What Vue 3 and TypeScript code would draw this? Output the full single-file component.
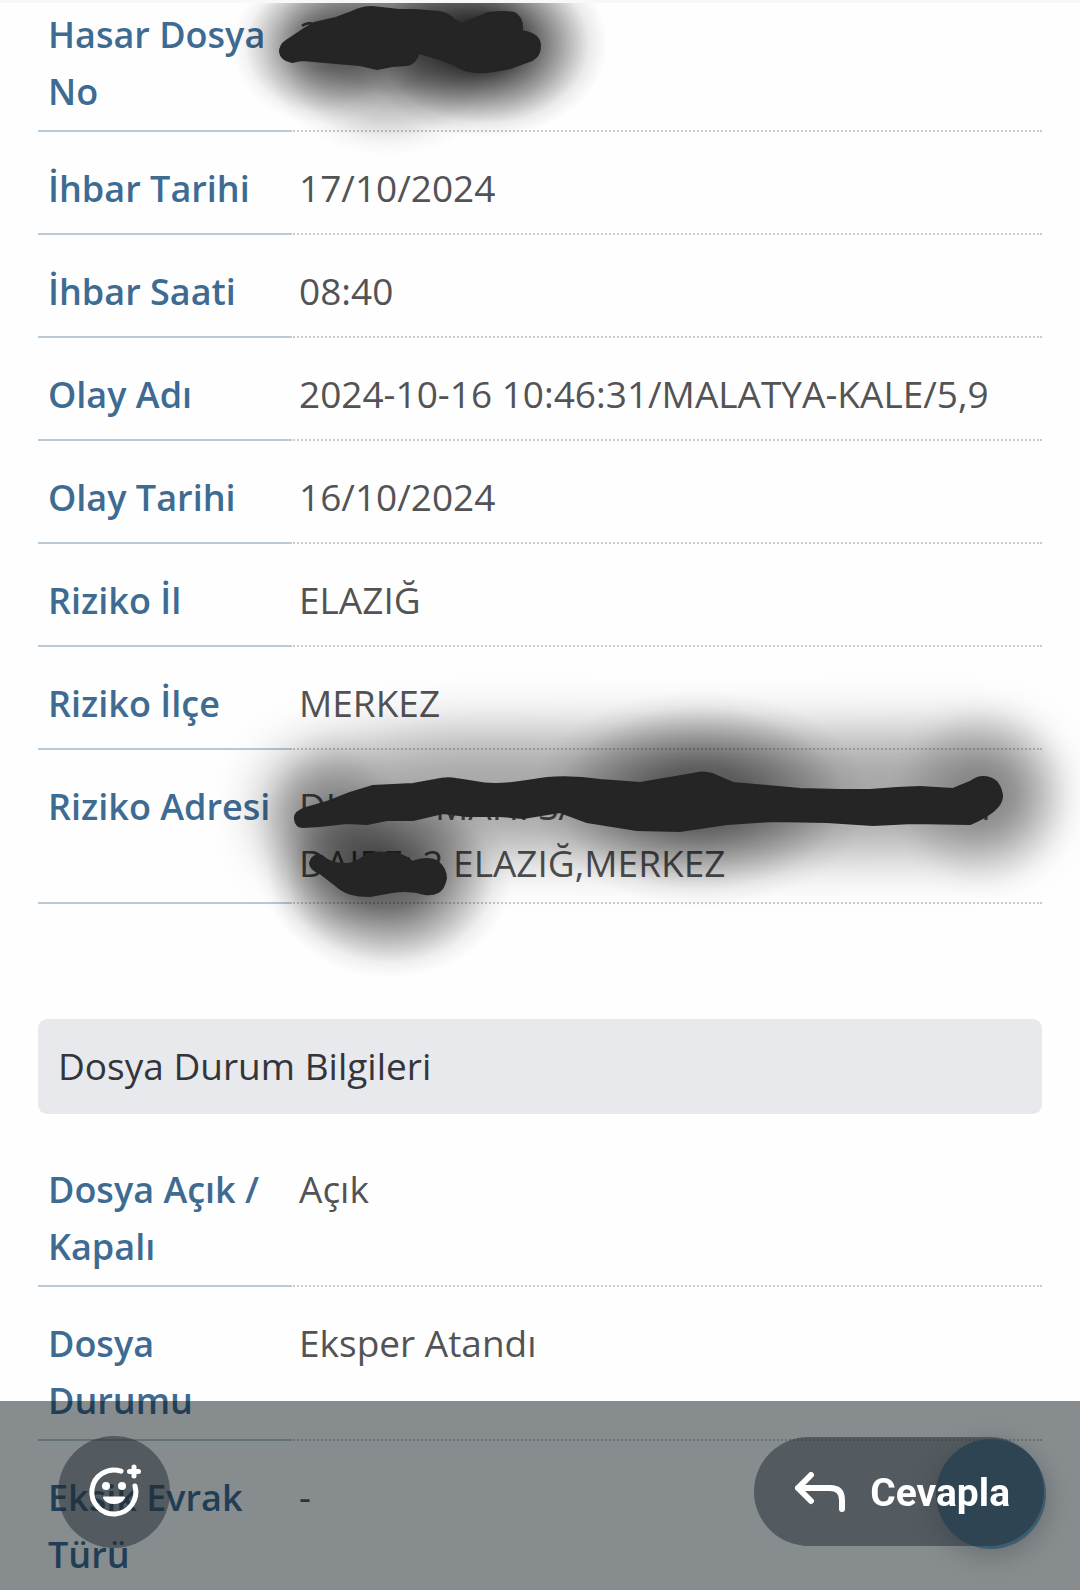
<script setup lang="ts">
interface Row {
  label: string
  value: string
  kind?: 'number' | 'address'
}

const claimRows: Row[] = [
  { label: 'Hasar Dosya No', value: '2', kind: 'number' },
  { label: 'İhbar Tarihi', value: '17/10/2024' },
  { label: 'İhbar Saati', value: '08:40' },
  { label: 'Olay Adı', value: '2024-10-16 10:46:31/MALATYA-KALE/5,9' },
  { label: 'Olay Tarihi', value: '16/10/2024' },
  { label: 'Riziko İl', value: 'ELAZIĞ' },
  { label: 'Riziko İlçe', value: 'MERKEZ' },
  { label: 'Riziko Adresi', value: 'DAIRE: 2 ELAZIĞ,MERKEZ', kind: 'address' },
]

const statusRows: Row[] = [
  { label: 'Dosya Açık / Kapalı', value: 'Açık' },
  { label: 'Dosya Durumu', value: 'Eksper Atandı' },
  { label: 'Eksik Evrak Türü', value: '-' },
]
</script>

<template>
  <main class="page">
    <table class="info">
      <tbody>
        <tr v-for="row in claimRows" :key="row.label">
          <th scope="row">{{ row.label }}</th>
          <td>
            <div v-if="row.kind === 'address'" class="street">
              <span>DI</span><span>MAH. SA</span><span>I</span>
            </div>
            {{ row.value }}
          </td>
        </tr>
      </tbody>
    </table>

    <h2 class="section">Dosya Durum Bilgileri</h2>

    <table class="info status">
      <tbody>
        <tr v-for="row in statusRows" :key="row.label">
          <th scope="row">{{ row.label }}</th>
          <td>{{ row.value }}</td>
        </tr>
      </tbody>
    </table>

    <!-- Pen strokes that hide private details, with their soft glow -->
    <svg class="marks" viewBox="0 0 1080 1000" aria-hidden="true">
      <defs>
        <filter id="wide" filterUnits="userSpaceOnUse" x="0" y="500" width="1280" height="600">
          <feGaussianBlur stdDeviation="27" />
        </filter>
        <radialGradient id="glow">
          <stop offset="0" stop-color="#000" />
          <stop offset=".3" stop-color="#000" stop-opacity=".86" />
          <stop offset=".6" stop-color="#000" stop-opacity=".45" />
          <stop offset=".85" stop-color="#000" stop-opacity=".09" />
          <stop offset="1" stop-color="#000" stop-opacity="0" />
        </radialGradient>
      </defs>
      <g fill="url(#glow)">
        <ellipse cx="320" cy="46" rx="88" ry="78" opacity=".5" />
        <ellipse cx="388" cy="60" rx="122" ry="96" opacity=".42" />
        <ellipse cx="400" cy="20" rx="140" ry="90" opacity=".35" />
        <ellipse cx="484" cy="44" rx="124" ry="94" opacity=".85" />
        <path d="M325 810L450 792L700 794L985 792" fill="none" stroke="#000" stroke-width="120" stroke-linecap="round" stroke-linejoin="round" opacity=".34" filter="url(#wide)" />
        <ellipse cx="985" cy="796" rx="98" ry="104" opacity=".22" />
        <ellipse cx="700" cy="798" rx="170" ry="108" opacity=".52" />
        <ellipse cx="330" cy="840" rx="80" ry="110" opacity=".26" />
        <ellipse cx="390" cy="878" rx="122" ry="100" opacity=".64" />
      </g>
      <g class="ink">
        <path d="M280 52Q280 45 286 41L304 29L314 23L336 18L352 12Q362 7 372 7L399 10L414 10L439 12Q450 14 454 20L462 24L488 13Q506 11 514 13Q523 17 522 31Q540 34 540 46Q540 56 532 60L510 68Q490 73 474 72Q464 71 455 65L443 60L419 53Q415 64 407 65L392 66L377 69L360 65L336 63L302 60L292 62Q281 60 280 52Z" />
        <path d="M303 827L320 826L347 823L367 824L387 820L413 820L443 813L467 816L500 816L523 818L560 812L587 822L637 830L680 831L727 824L773 821L827 822L873 825L913 823L970 824Q1003 810 1002 795Q999 777 983 777Q977 777 970 782L953 789L920 787L897 788L870 790L840 790L800 789L767 786L733 783L712 774Q702 771 693 774L640 783L600 780Q573 776 547 778L520 782Q493 786 475 782L456 779Q447 777 435 780L413 784L373 786L350 793L327 802L306 808Q294 812 295 819Q296 827 303 827Z" />
        <path d="M310 863Q313 853 322 856Q330 864 346 864Q354 864 362 858Q373 851 386 853Q404 853 412 862Q429 856 438 862Q446 869 446 878Q444 889 438 892Q432 895 425 894Q410 889 392 892L370 896Q348 896 338 887L320 873Q310 869 310 863Z" />
      </g>
    </svg>

    <button class="fab" type="button" aria-label="Yukarı"></button>

    <footer class="actions">
      <button class="react" type="button" aria-label="Tepki ekle">
        <svg viewBox="0 0 56 56" width="56" height="56" aria-hidden="true">
          <g fill="none" stroke="#fff" stroke-width="5" stroke-linecap="round">
            <path d="M35 7.2A22 22 0 1 0 49 22" />
            <path d="M48 3V12M43.500 7.500H52.500" />
          </g>
          <circle cx="20" cy="22" r="4" fill="#fff" />
          <circle cx="36" cy="22" r="4" fill="#fff" />
          <path d="M18 32.500H38Q39.500 32.500 39 34Q36 40 28 40T17 34Q16.500 32.500 18 32.500Z" fill="#fff" />
        </svg>
      </button>
      <button class="reply" type="button">
        <svg viewBox="0 0 50 40" width="50" height="40" aria-hidden="true">
          <path d="M16 3L3 16L16 29M3 16H35Q47 16 47 28V37" fill="none" stroke="#fff" stroke-width="6" stroke-linecap="round" stroke-linejoin="round" />
        </svg>
        <span>Cevapla</span>
      </button>
    </footer>
  </main>
</template>

<style>
body {
  margin: 0;
  background: #fefefe;
}
</style>

<style scoped>
.page {
  position: relative;
  box-sizing: border-box;
  min-height: 100vh;
  padding: 0 38px;
  overflow: hidden;
  border-top: 3px solid #f8f8f8;
  font-family: "Open Sans", "Noto Sans", sans-serif;
  font-size: 37px;
  line-height: 57px;
  color: #535355;
}

.info {
  width: 100%;
  border-collapse: separate;
  border-spacing: 0;
  table-layout: fixed;
}

.info th,
.info td {
  box-sizing: border-box;
  height: 103px;
  padding: 28px 8px 10px;
  vertical-align: top;
  text-align: left;
}

.info th {
  width: 252px;
  padding-right: 0;
  padding-left: 10px;
  font-size: 36px;
  font-weight: 600;
  color: #3e6b92;
  border-bottom: 2px solid #b9cad6;
}

.info td {
  padding: 27px 9px 11px;
  border-bottom: 2px dotted #c3ccd2;
}

.info tr:first-child th {
  padding-top: 3px;
}

.info tr:first-child td {
  padding-top: 2px;
}

.info.status tr:first-child th {
  padding-top: 28px;
}

.info.status tr:first-child td {
  padding-top: 27px;
}

.info.status tr:last-child th,
.info.status tr:last-child td {
  padding-bottom: 0;
  border-bottom: 0;
}

.street {
  display: flex;
  padding-right: 42px;
}

.street span:nth-child(1) {
  width: 136px;
}

.street span:nth-child(3) {
  margin-left: auto;
}

.section {
  margin: 115px 0 19px;
  padding: 18px 20px 20px;
  border-radius: 9px;
  background: #e7e9ed;
  font-size: 37px;
  font-weight: 400;
  color: #34353a;
}

.marks {
  position: absolute;
  top: -3px;
  left: 0;
  width: 100%;
  pointer-events: none;
}

.ink {
  fill: #252525;
  stroke: #252525;
  stroke-width: 2;
  stroke-linejoin: round;
}

.fab {
  position: fixed;
  right: 34px;
  bottom: 41px;
  width: 110px;
  height: 110px;
  padding: 0;
  border: 0;
  border-radius: 50%;
  background: #6fa6c8;
  box-shadow: 0 6px 30px rgba(0, 0, 0, 0.25);
}

.actions {
  position: fixed;
  right: 0;
  bottom: 0;
  left: 0;
  display: flex;
  align-items: center;
  justify-content: space-between;
  box-sizing: border-box;
  height: 189px;
  padding: 0 36px 8px 58px;
  background: rgba(2, 12, 16, 0.47);
}

.actions button {
  display: flex;
  align-items: center;
  justify-content: center;
  border: 0;
  background: rgba(34, 42, 50, 0.5);
  color: #fff;
}

.react {
  width: 112px;
  height: 112px;
  padding: 0;
  border-radius: 50%;
}

.reply {
  gap: 25px;
  height: 109px;
  padding: 0 34px 0 41px;
  border-radius: 55px;
  font: 700 39px/57px Roboto, sans-serif;
}

.reply span {
  padding-top: 4px;
}
</style>
